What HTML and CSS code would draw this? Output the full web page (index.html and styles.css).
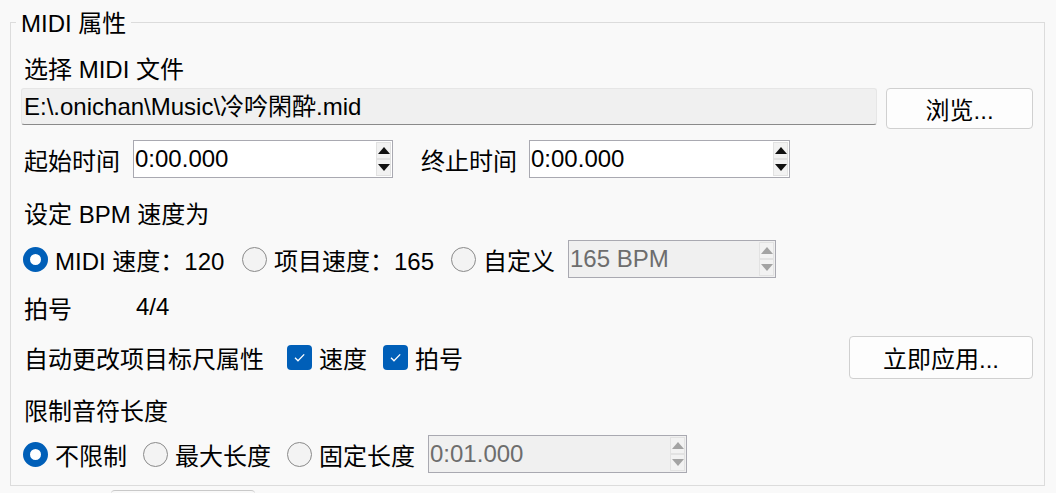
FILE: index.html
```html
<!DOCTYPE html>
<html lang="zh-CN">
<head>
    <meta charset="UTF-8">
    <meta name="viewport" content="width=device-width, initial-scale=1.0">
    <title>MIDI 属性</title>
    <link rel="stylesheet" href="styles.css">
</head>
<body>
<fieldset class="group">
    <legend>MIDI 属性</legend>

    <div class="row caption first">选择 MIDI 文件</div>
    <div class="row file-row">
        <div class="path-field">E:\.onichan\Music\冷吟閑酔.mid</div>
        <button class="btn browse">浏览...</button>
    </div>

    <div class="row time-row">
        <span class="label start-label">起始时间</span>
        <div class="spin start-spin">
            <span class="spin-value">0:00.000</span>
            <span class="spin-arrows">
                <span class="arrow"><svg width="12" height="7" viewBox="0 0 12 7"><path d="M0 7 L6 0 L12 7 Z"/></svg></span>
                <span class="arrow"><svg width="12" height="7" viewBox="0 0 12 7"><path d="M0 0 L12 0 L6 7 Z"/></svg></span>
            </span>
        </div>
        <span class="label end-label">终止时间</span>
        <div class="spin end-spin">
            <span class="spin-value">0:00.000</span>
            <span class="spin-arrows">
                <span class="arrow"><svg width="12" height="7" viewBox="0 0 12 7"><path d="M0 7 L6 0 L12 7 Z"/></svg></span>
                <span class="arrow"><svg width="12" height="7" viewBox="0 0 12 7"><path d="M0 0 L12 0 L6 7 Z"/></svg></span>
            </span>
        </div>
    </div>

    <div class="row caption bpm-caption">设定 BPM 速度为</div>
    <div class="row option-row bpm-row">
        <label class="opt opt-midi"><span class="radio checked"></span>MIDI 速度：120</label>
        <label class="opt opt-project"><span class="radio"></span>项目速度：165</label>
        <label class="opt opt-custom"><span class="radio"></span>自定义</label>
        <div class="spin disabled bpm-spin">
            <span class="spin-value">165 BPM</span>
            <span class="spin-arrows">
                <span class="arrow"><svg width="12" height="7" viewBox="0 0 12 7"><path d="M0 7 L6 0 L12 7 Z"/></svg></span>
                <span class="arrow"><svg width="12" height="7" viewBox="0 0 12 7"><path d="M0 0 L12 0 L6 7 Z"/></svg></span>
            </span>
        </div>
    </div>

    <div class="row caption beat-row">
        <span class="label beat-label">拍号</span>
        <span>4/4</span>
    </div>

    <div class="row ruler-row">
        <span class="label ruler-label">自动更改项目标尺属性</span>
        <label class="chk-opt"><span class="checkbox"><svg width="25" height="25" viewBox="0 0 25 25"><path d="M8 12.8 L11 15.8 L17.2 9.4" fill="none" stroke="#fff" stroke-width="1.3"/></svg></span>速度</label>
        <label class="chk-opt"><span class="checkbox"><svg width="25" height="25" viewBox="0 0 25 25"><path d="M8 12.8 L11 15.8 L17.2 9.4" fill="none" stroke="#fff" stroke-width="1.3"/></svg></span>拍号</label>
        <button class="btn apply">立即应用...</button>
    </div>

    <div class="row caption limit-caption">限制音符长度</div>
    <div class="row option-row limit-row">
        <label class="opt opt-none"><span class="radio checked"></span>不限制</label>
        <label class="opt opt-max"><span class="radio"></span>最大长度</label>
        <label class="opt opt-fixed"><span class="radio"></span>固定长度</label>
        <div class="spin disabled length-spin">
            <span class="spin-value">0:01.000</span>
            <span class="spin-arrows">
                <span class="arrow"><svg width="12" height="7" viewBox="0 0 12 7"><path d="M0 7 L6 0 L12 7 Z"/></svg></span>
                <span class="arrow"><svg width="12" height="7" viewBox="0 0 12 7"><path d="M0 0 L12 0 L6 7 Z"/></svg></span>
            </span>
        </div>
    </div>
</fieldset>
<div class="footer">
    <div class="footer-btn"></div>
</div>
</body>
</html>
```

FILE: styles.css
```css
body {
    margin: 0;
    background-color: #f9f9f9;
    font-family: "Liberation Sans", "Noto Sans CJK SC", sans-serif;
    font-size: 24px;
    color: #000;
}
.group {
    box-sizing: border-box;
    width: 1035px;
    margin: 6px 0 0 10px;
    padding: 0 11px 12px 10px;
    border: 1px solid #dcdcdc;
    min-inline-size: 0;
}
.group legend {
    margin-left: -5px;
    padding: 4px 5px 0;
    line-height: 28px;
}
.row {
    display: flex;
    align-items: center;
}
.caption {
    height: 30px;
    padding-left: 3px;
}
.first { margin-top: 14px; }

/* file path + browse */
.file-row {
    margin-top: 6px;
    align-items: flex-start;
}
.path-field {
    box-sizing: border-box;
    width: 857px;
    height: 37px;
    padding-left: 2px;
    line-height: 35px;
    background-color: #f0f0f0;
    border: 1px solid #e6e6e6;
    border-bottom-color: #8a8a8a;
    border-radius: 3px;
    white-space: nowrap;
}
.btn {
    box-sizing: border-box;
    font: inherit;
    color: #000;
    background-color: #fdfdfd;
    border: 1px solid #d0d0d0;
    border-radius: 4px;
    padding: 0;
}
.browse {
    width: 147px;
    height: 41px;
    margin-left: 9px;
}

/* time range */
.time-row {
    margin-top: 11px;
    height: 38px;
}
.label {
    box-sizing: border-box;
    padding-left: 3px;
    flex: none;
}
.start-label { width: 112px; }
.end-label { width: 136px; padding-left: 28px; }
.spin {
    box-sizing: border-box;
    display: flex;
    height: 38px;
    background-color: #fff;
    border: 1px solid #a9a9b1;
}
.start-spin { width: 260px; }
.end-spin { width: 261px; }
.spin-value {
    flex: 1;
    padding-left: 1px;
    line-height: 36px;
}
.spin-arrows {
    display: flex;
    flex-direction: column;
    padding: 1px 1px 1px 0;
}
.arrow {
    box-sizing: border-box;
    width: 15px;
    height: 17px;
    display: flex;
    align-items: center;
    justify-content: center;
    background-color: #f2f2f2;
    border: 1px solid #e2e2e2;
}
.arrow svg { fill: #111; flex: none; }
.spin.disabled {
    background-color: #f0f0f0;
    color: #6d6d6d;
}
.spin.disabled .arrow svg { fill: #a3a3a3; }

/* tempo options */
.bpm-caption { margin-top: 19px; }
.option-row { height: 38px; }
.bpm-row { margin-top: 13px; }
.opt {
    box-sizing: border-box;
    display: flex;
    align-items: center;
    gap: 7px;
    flex: none;
    white-space: nowrap;
}
.bpm-row .opt-midi { margin-left: 2px; width: 219px; }
.opt-project { width: 209px; }
.opt-custom { width: 117px; }
.bpm-spin { width: 208px; }
.radio {
    box-sizing: border-box;
    width: 25px;
    height: 25px;
    border-radius: 50%;
    border: 1px solid #8a8a8a;
    background-color: #f3f3f3;
    flex: none;
}
.radio.checked {
    background-color: #fff;
    border: 7.5px solid #005fb8;
}

/* time signature */
.beat-row { margin-top: 14px; padding-left: 0; }
.beat-label { width: 115px; }

/* ruler */
.ruler-row {
    margin-top: 14px;
    height: 43px;
}
.ruler-label { width: 266px; }
.chk-opt {
    display: flex;
    align-items: center;
    gap: 7px;
    width: 96px;
    flex: none;
}
.checkbox {
    width: 25px;
    height: 25px;
    border-radius: 4px;
    background-color: #005fb8;
    flex: none;
}
.checkbox svg { display: block; }
.apply {
    width: 184px;
    height: 43px;
    margin-left: auto;
}

/* note length */
.limit-caption { margin-top: 15px; }
.limit-row { margin-top: 11px; }
.limit-row .opt-none { margin-left: 2px; width: 120px; }
.opt-max { width: 144px; }
.opt-fixed { width: 141px; }
.length-spin { width: 259px; }

.footer { padding: 4px 0 0 111px; }
.footer-btn {
    width: 144px;
    height: 30px;
    border-top: 1px solid #c9c9c9;
    border-radius: 4px 4px 0 0;
}
```
